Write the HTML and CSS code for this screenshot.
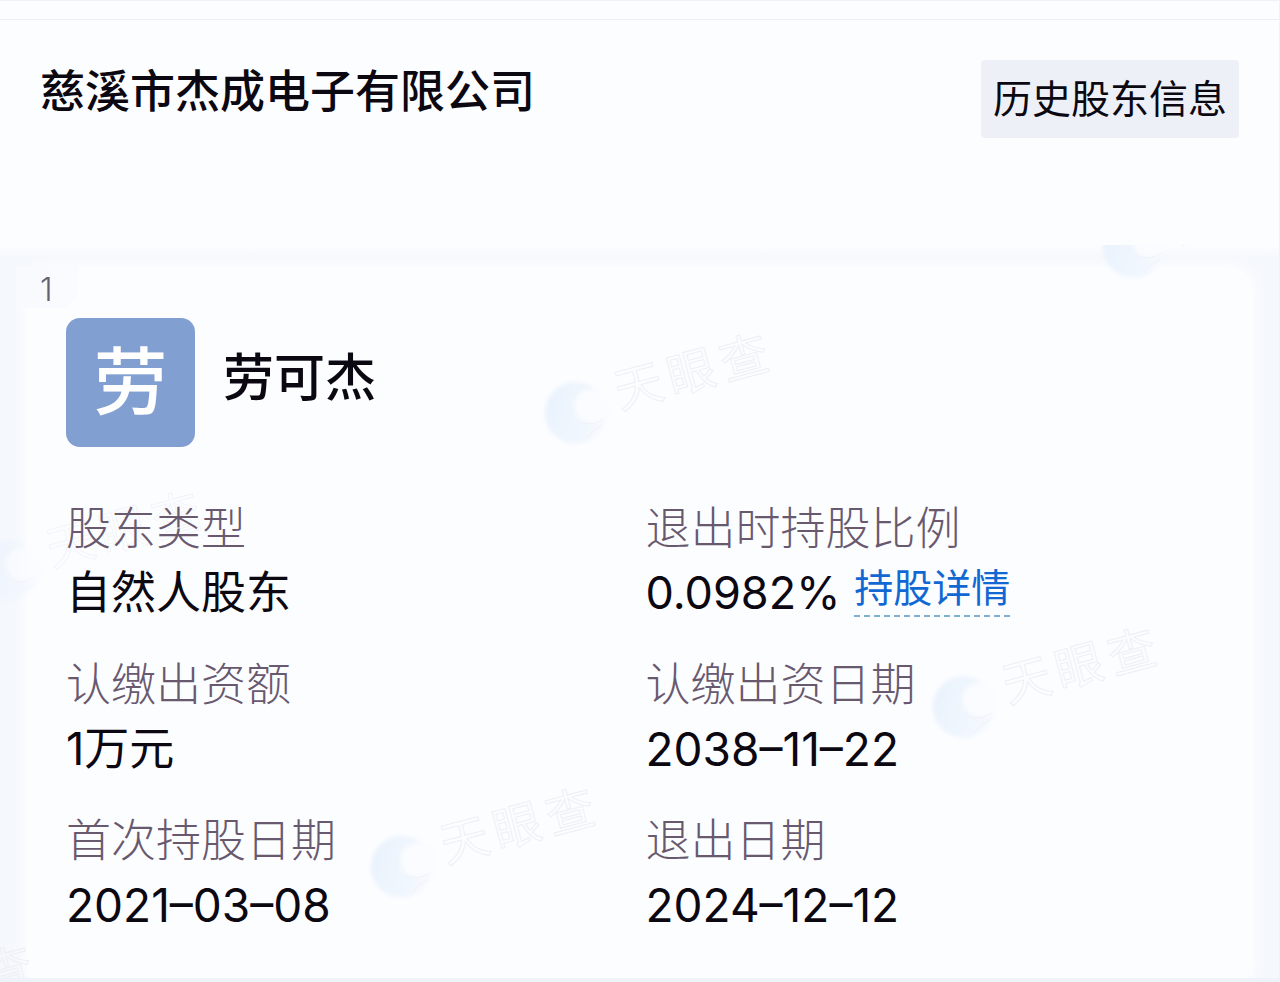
FILE: index.html
```html
<!DOCTYPE html>
<html lang="zh-CN">
<head>
<meta charset="utf-8">
<meta name="viewport" content="width=device-width, initial-scale=1">
<title>历史股东信息</title>
<link rel="stylesheet" href="styles.css">
</head>
<body>
<svg class="defs" aria-hidden="true">
  <defs>
    <linearGradient id="orb" x1="0" y1="0" x2="1" y2="0.3">
      <stop offset="0" stop-color="#e7f1fd"/>
      <stop offset="1" stop-color="#f5f9fe"/>
    </linearGradient>
    <filter id="soft" x="-20%" y="-20%" width="140%" height="140%">
      <feGaussianBlur stdDeviation="2"/>
    </filter>
    <symbol id="mark" viewBox="0 0 240 150">
      <circle cx="36" cy="90" r="31" fill="url(#orb)" filter="url(#soft)"/>
      <path fill="#fafcff" filter="url(#soft)" d="M37 73c6-7 19-10 30-4l2 26c-10 5-24 7-30 0-5-6-6-15-2-22z"/>
      <path fill="none" stroke="#f0f4fa" stroke-width="1" d="M38 99c10 3 18 2 26-3M46 116c5-7 10-10 16-13"/>
      <text class="mark-text" transform="translate(80 86) rotate(-15)" x="0 54 109" y="0">天眼查</text>
    </symbol>
  </defs>
</svg>
<div class="page">
  <header class="header">
    <h1 class="company">慈溪市杰成电子有限公司</h1>
    <button class="history" type="button">历史股东信息</button>
  </header>
  <main class="list">
    <article class="card">
      <span class="index">1</span>
      <div class="holder">
        <span class="avatar" aria-hidden="true">劳</span>
        <h2 class="name">劳可杰</h2>
      </div>
      <dl class="facts">
        <div><dt>股东类型</dt><dd>自然人股东</dd></div>
        <div><dt>退出时持股比例</dt><dd>0.0982%<a class="detail" href="#">持股详情</a></dd></div>
        <div><dt>认缴出资额</dt><dd>1万元</dd></div>
        <div><dt>认缴出资日期</dt><dd><time datetime="2038-11-22">2038–11–22</time></dd></div>
        <div><dt>首次持股日期</dt><dd><time datetime="2021-03-08">2021–03–08</time></dd></div>
        <div><dt>退出日期</dt><dd><time datetime="2024-12-12">2024–12–12</time></dd></div>
      </dl>
    </article>
    <div class="marks" aria-hidden="true">
      <svg class="mark mark-a"><use href="#mark"/></svg>
      <svg class="mark mark-b"><use href="#mark"/></svg>
      <svg class="mark mark-c"><use href="#mark"/></svg>
      <svg class="mark mark-d"><use href="#mark"/></svg>
      <svg class="mark mark-e"><use href="#mark"/></svg>
      <svg class="mark mark-f"><use href="#mark"/></svg>
    </div>
  </main>
</div>
</body>
</html>
```
FILE: styles.css
```css
* { box-sizing: border-box; }
body {
  margin: 0;
  background: #fcfdff;
  color: #0c0812;
  font-family: Inter, "Noto Sans CJK SC", sans-serif;
}
h1, h2, dl, dd { margin: 0; }
.defs { position: absolute; width: 0; height: 0; }
.page {
  min-height: 100vh;
  display: flex;
  flex-direction: column;
  border-top: 1px solid #eef3f7;
  border-right: 1px solid #eef3f7;
}
.page::before {
  content: "";
  height: 18px;
  border-bottom: 1px solid #e9f1f6;
}
.header {
  display: flex;
  justify-content: space-between;
  align-items: flex-start;
  min-height: 225px;
  padding: 40px 40px 0;
}
.company {
  font-size: 45px;
  font-weight: 500;
  line-height: 64px;
}
.history {
  height: 78px;
  padding: 0 12px;
  border: 0;
  border-radius: 4px;
  background: #edf0f6;
  color: inherit;
  font-family: inherit;
  font-size: 39px;
  line-height: 78px;
}
.list {
  position: relative;
  display: grid;
  flex: 1;
  overflow: hidden;
  padding: 22px 26px 0;
  border-bottom: 4px solid #edf3f8;
  background: linear-gradient(#fcfdff, #f5f8fd 12px);
}
.card {
  position: relative;
  padding: 51px 28px 24px 40px;
  border-radius: 24px 24px 8px 8px;
  background: #fcfdff;
  box-shadow: 0 0 12px 4px #fcfdff;
}
.index {
  position: absolute;
  top: -1px;
  left: -10px;
  width: 62px;
  padding: 6px 0 0 24px;
  border-bottom-right-radius: 20px;
  background: linear-gradient(90deg, #f8fafe, #f9fbfe);
  color: #65606f;
  font-size: 32px;
  font-weight: 300;
  line-height: 36px;
}
.holder {
  display: flex;
  gap: 28px;
}
.avatar {
  width: 129px;
  height: 129px;
  border-radius: 14px;
  background: #829fd1;
  color: #fff;
  font-size: 74px;
  font-weight: 500;
  line-height: 129px;
  text-align: center;
}
.name {
  font-size: 51px;
  font-weight: 500;
  line-height: 120px;
}
.facts {
  position: relative;
  z-index: 1;
  display: grid;
  grid-template-columns: 1fr 1fr;
  row-gap: 28px;
  margin-top: 50px;
}
.facts dt, .facts dd {
  font-size: 45px;
  line-height: 64px;
}
.facts dt { color: #69596f; font-weight: 300; }
.facts dd {
  display: flex;
  align-items: flex-start;
  gap: 14px;
}
.facts time { font-size: 46px; }
.detail {
  border-bottom: 2px dashed #7eb1cf;
  color: #1268d3;
  font-size: 39px;
  line-height: 54px;
  text-decoration: none;
}
.marks { position: absolute; inset: 0; pointer-events: none; }
.mark { position: absolute; width: 240px; height: 150px; }
.mark-text {
  fill: none;
  stroke: #eff0f4;
  stroke-width: 1px;
  font-family: "Noto Sans CJK SC", sans-serif;
  font-size: 48px;
}
.mark-a { left: 540px; top: 78px; }
.mark-b { left: 928px; top: 372px; }
.mark-c { left: 366px; top: 532px; }
.mark-d { left: 1098px; top: -88px; }
.mark-e { left: -28px; top: 236px; opacity: 0.7; }
.mark-f { left: -196px; top: 690px; }
```
